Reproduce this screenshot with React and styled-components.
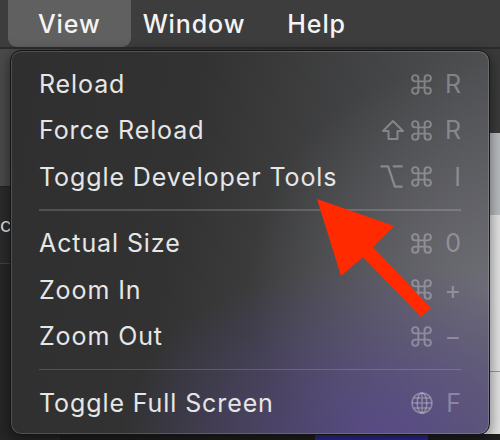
import React from "react";
import styled, { createGlobalStyle } from "styled-components";
import { Command, Option } from "lucide-react";

const GlobalStyle = createGlobalStyle`
  html, body {
    margin: 0;
    padding: 0;
    background: #262626;
  }
  body {
    font-family: Inter, "Liberation Sans", sans-serif;
  }
`;

const Screen = styled.div`
  position: relative;
  width: 500px;
  height: 440px;
  overflow: hidden;
  display: flex;
  flex-direction: column;
  background: #262626;
`;

const MenuBar = styled.div`
  height: 47px;
  flex-shrink: 0;
  display: flex;
  align-items: stretch;
  padding-left: 8px;
  background: #3d3d3d;
  border-bottom: 2px solid #2c2c2c;
`;

const BarItem = styled.div`
  display: flex;
  align-items: center;
  padding: 0 ${(p) => p.$pad}px;
  font-size: 25px;
  font-weight: 500;
  letter-spacing: 0.9px;
  color: #f4f4f4;
  border-radius: 0 0 9px 9px;
  background: ${(p) => (p.$active ? "#606060" : "transparent")};
`;

const Body = styled.div`
  flex: 1;
  display: flex;
`;

const Sidebar = styled.div`
  width: 60px;
  display: flex;
  flex-direction: column;
`;

const SideBlock = styled.div`
  height: ${(p) => p.$h}px;
  background: ${(p) => p.$bg};
  border-bottom: 1px solid ${(p) => p.$line || "transparent"};
  color: #ddd;
  font-size: 20px;
  display: flex;
  align-items: center;
`;

const Main = styled.div`
  flex: 1;
  display: flex;
  flex-direction: column;
`;

const MainBlock = styled.div`
  height: ${(p) => p.$h}px;
  flex: ${(p) => (p.$h ? "none" : 1)};
  background: ${(p) => p.$bg};
  display: flex;
  justify-content: flex-end;
  align-items: flex-end;
`;

const RuleMark = styled.div`
  width: 40px;
  height: 1px;
  background: #9a9a9a;
  margin-bottom: 62px;
`;

const PurpleTab = styled.div`
  width: 113px;
  height: 6px;
  margin-right: 72px;
  background: #2e2a8a;
`;

const Menu = styled.div`
  position: absolute;
  left: 10px;
  top: 50px;
  width: 480px;
  height: 385px;
  box-sizing: border-box;
  padding: 10px 0 0;
  border-radius: 11px;
  border: 1px solid #141414;
  box-shadow: inset 0 0 0 1px rgba(255, 255, 255, 0.16),
    0 4px 14px rgba(0, 0, 0, 0.5);
  background:
    radial-gradient(ellipse 55% 45% at 78% 100%, rgba(90, 72, 150, 0.75), rgba(90, 72, 150, 0) 100%),
    radial-gradient(ellipse 50% 60% at 100% 62%, rgba(112, 112, 120, 0.9), rgba(112, 112, 120, 0) 100%),
    linear-gradient(100deg, #2f2f2f 0%, #323232 35%, #4a4b4d 80%, #545558 100%);
  display: flex;
  flex-direction: column;
`;

const Row = styled.div`
  height: 46.3px;
  display: flex;
  align-items: center;
  justify-content: space-between;
  padding: 0 28px 0 28px;
  font-size: 25px;
  letter-spacing: 0.9px;
  line-height: 46.3px;
  color: #e6e6e6;
`;

const Shortcut = styled.div`
  display: flex;
  align-items: center;
  gap: 4px;
  color: rgba(200, 200, 205, 0.45);
`;

const Mod = styled.span`
  display: inline-flex;
  align-items: center;
`;

const Key = styled.span`
  font-size: 25px;
  min-width: 17px;
  margin-left: 6px;
  text-align: right;
  letter-spacing: 0;
`;

const Separator = styled.div`
  height: 20.4px;
  display: flex;
  align-items: center;
  padding: 0 28px;

  &::after {
    content: "";
    flex: 1;
    height: 1.5px;
    background: rgba(255, 255, 255, 0.16);
  }
`;

const Arrow = styled.svg`
  position: absolute;
  left: 0;
  top: 0;
  pointer-events: none;
`;

const Shift = () => (
  <svg width="24" height="22" viewBox="0 0 24 22" fill="none" stroke="currentColor" strokeWidth="2" strokeLinejoin="round">
    <path d="M12 2 L22 12 H16.5 V20 H7.5 V12 H2 Z" />
  </svg>
);

const Globe = () => (
  <svg width="24" height="24" viewBox="0 0 24 24" fill="none" stroke="currentColor" strokeWidth="1.6">
    <circle cx="12" cy="12" r="10" />
    <ellipse cx="12" cy="12" rx="4.8" ry="10" />
    <path d="M12 2v20M2 12h20M3.6 7h16.8M3.6 17h16.8" />
  </svg>
);

const modIcon = (m) => {
  if (m === "cmd") return <Command size={25} strokeWidth={1.9} />;
  if (m === "opt") return <Option size={27} strokeWidth={2} />;
  if (m === "shift") return <Shift />;
  return <Globe />;
};

const items = [
  [
    { label: "Reload", mods: ["cmd"], key: "R" },
    { label: "Force Reload", mods: ["shift", "cmd"], key: "R" },
    { label: "Toggle Developer Tools", mods: ["opt", "cmd"], key: "I" },
  ],
  [
    { label: "Actual Size", mods: ["cmd"], key: "0" },
    { label: "Zoom In", mods: ["cmd"], key: "+" },
    { label: "Zoom Out", mods: ["cmd"], key: "−" },
  ],
  [{ label: "Toggle Full Screen", mods: ["globe"], key: "F" }],
];

const App = () => {
  return (
    <Screen>
      <GlobalStyle />
      <MenuBar>
        <BarItem $active $pad={30}>View</BarItem>
        <BarItem $pad={12}>Window</BarItem>
        <BarItem $pad={30}>Help</BarItem>
      </MenuBar>
      <Body>
        <Sidebar>
          <SideBlock $h={137} $bg="#4a4a4a" $line="#222" />
          <SideBlock $h={76} $bg="#2b2b2b" $line="#444">c</SideBlock>
          <SideBlock $h={150} $bg="#262626" />
        </Sidebar>
        <Main>
          <MainBlock $h={84} $bg="#3a3a3a" />
          <MainBlock $h={82} $bg="#b9bcbf" />
          <MainBlock $h={0} $bg="#e2e2e2">
            <RuleMark />
          </MainBlock>
          <MainBlock $h={6} $bg="#1e1e1e">
            <PurpleTab />
          </MainBlock>
        </Main>
      </Body>

      <Menu>
        {items.map((group, gi) => (
          <React.Fragment key={gi}>
            {gi > 0 && <Separator />}
            {group.map((it) => (
              <Row key={it.label}>
                <span>{it.label}</span>
                <Shortcut>
                  {it.mods.map((m) => (
                    <Mod key={m}>{modIcon(m)}</Mod>
                  ))}
                  <Key>{it.key}</Key>
                </Shortcut>
              </Row>
            ))}
          </React.Fragment>
        ))}
      </Menu>

      <Arrow width="500" height="440" viewBox="0 0 500 440">
        <polygon
          points="317,199 394,226 373,247 431,308 421,317 363,257 341,276"
          fill="#ff2a00"
        />
      </Arrow>
    </Screen>
  );
};

export default App;
